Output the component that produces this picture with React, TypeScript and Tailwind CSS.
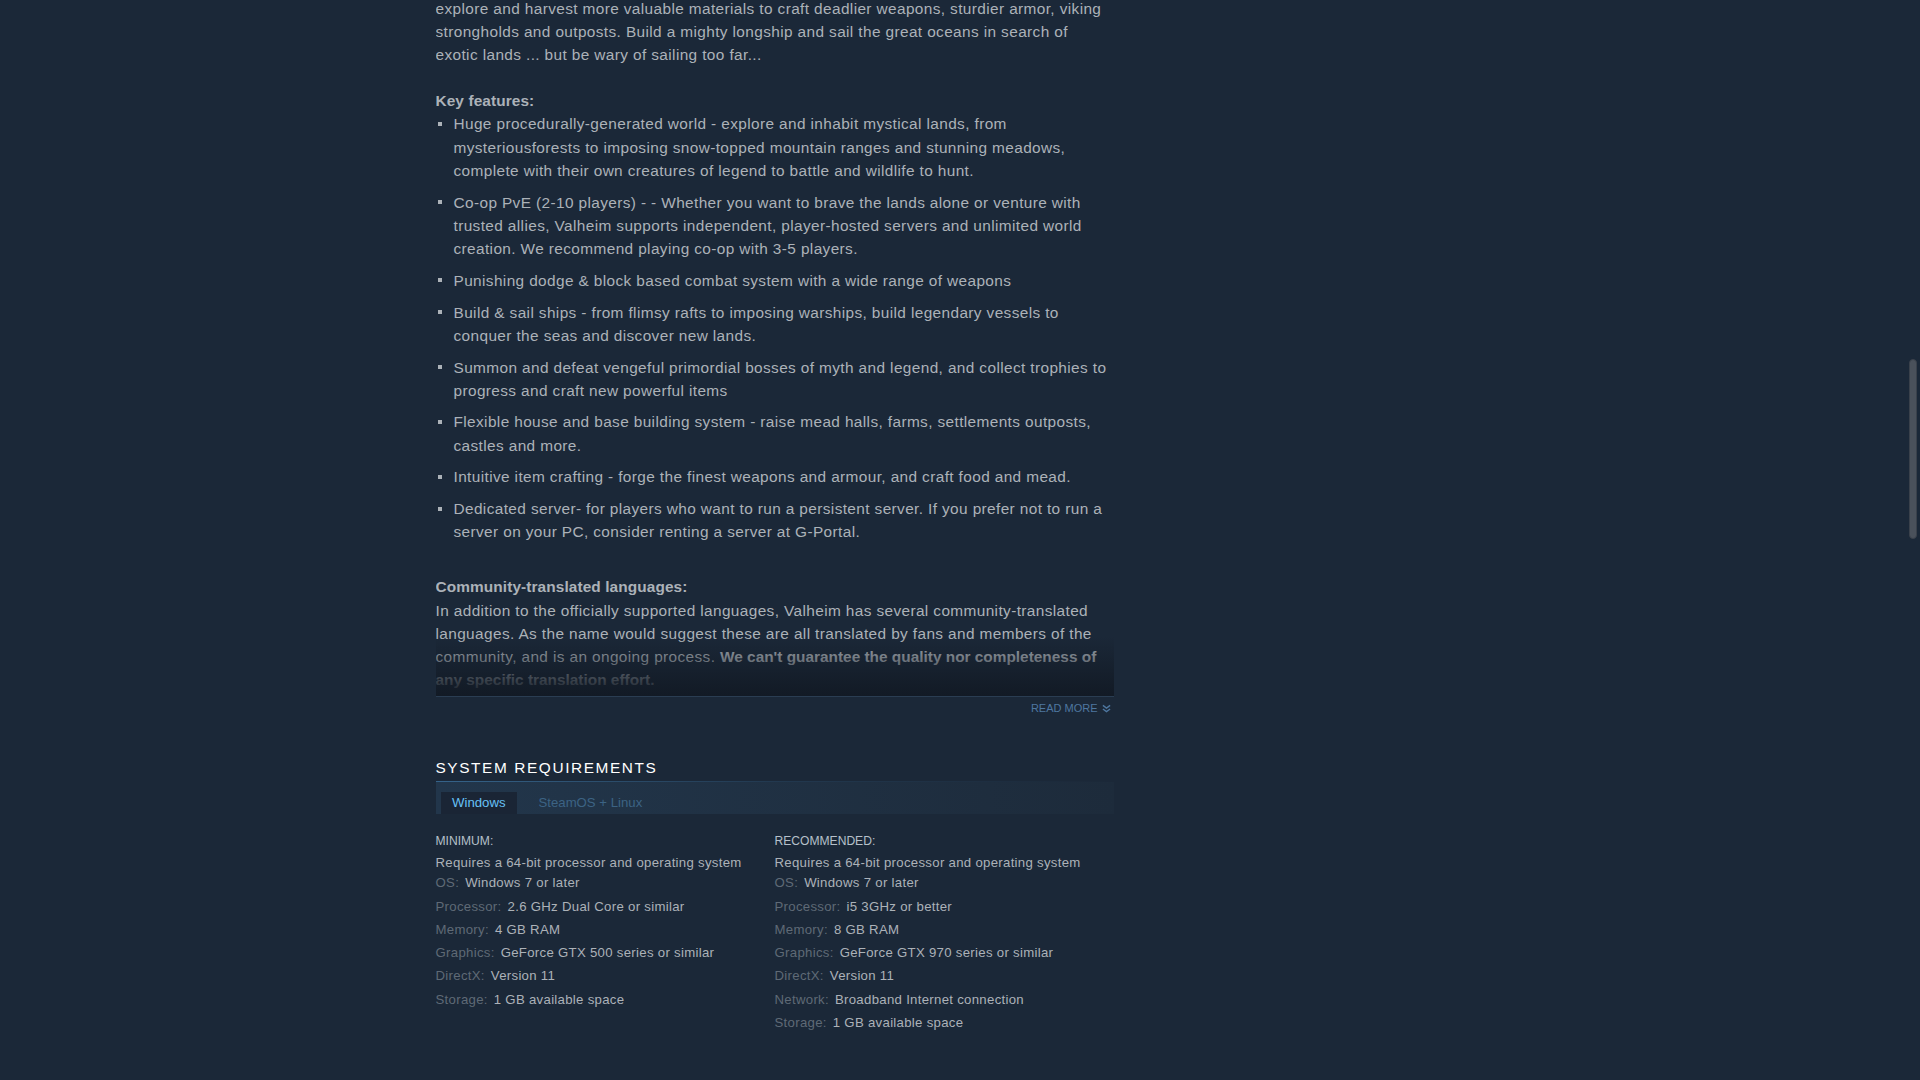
const features = [
  "Huge procedurally-generated world - explore and inhabit mystical lands, from mysteriousforests to imposing snow-topped mountain ranges and stunning meadows, complete with their own creatures of legend to battle and wildlife to hunt.",
  "Co-op PvE (2-10 players) - - Whether you want to brave the lands alone or venture with trusted allies, Valheim supports independent, player-hosted servers and unlimited world creation. We recommend playing co-op with 3-5 players.",
  "Punishing dodge & block based combat system with a wide range of weapons",
  "Build & sail ships - from flimsy rafts to imposing warships, build legendary vessels to conquer the seas and discover new lands.",
  "Summon and defeat vengeful primordial bosses of myth and legend, and collect trophies to progress and craft new powerful items",
  "Flexible house and base building system - raise mead halls, farms, settlements outposts, castles and more.",
  "Intuitive item crafting - forge the finest weapons and armour, and craft food and mead.",
  "Dedicated server- for players who want to run a persistent server. If you prefer not to run a server on your PC, consider renting a server at G-Portal.",
];

type Req = { label?: string; value: string };

const minimum: Req[] = [
  { label: "OS:", value: "Windows 7 or later" },
  { label: "Processor:", value: "2.6 GHz Dual Core or similar" },
  { label: "Memory:", value: "4 GB RAM" },
  { label: "Graphics:", value: "GeForce GTX 500 series or similar" },
  { label: "DirectX:", value: "Version 11" },
  { label: "Storage:", value: "1 GB available space" },
];

const recommended: Req[] = [
  { label: "OS:", value: "Windows 7 or later" },
  { label: "Processor:", value: "i5 3GHz or better" },
  { label: "Memory:", value: "8 GB RAM" },
  { label: "Graphics:", value: "GeForce GTX 970 series or similar" },
  { label: "DirectX:", value: "Version 11" },
  { label: "Network:", value: "Broadband Internet connection" },
  { label: "Storage:", value: "1 GB available space" },
];

function ReqColumn({ title, rows }: { title: string; rows: Req[] }) {
  return (
    <div>
      <p className="mb-[4px] text-[12.1px] leading-[16px] uppercase text-[#b6c0ca]">
        {title}
      </p>
      <ul className="text-[13.2px] leading-[19.8px] tracking-[0.3px] text-[#acb2b8]">
        <li className="mb-[1px]">Requires a 64-bit processor and operating system</li>
        {rows.map((row) => (
          <li key={row.label} className="mb-[3.5px]">
            <span className="mr-[6px] text-[#5f6a76]">{row.label}</span>
            {row.value}
          </li>
        ))}
      </ul>
    </div>
  );
}

export default function App() {
  return (
    <div className="flex h-screen overflow-hidden bg-[#1b2838] font-['Liberation_Sans',Arial,sans-serif]">
      <main className="flex-1">
        <div className="mx-auto w-[1034px]">
          <div className="w-[678px]">
            {/* description, collapsed */}
            <div className="relative -mt-[3px] h-[700px] overflow-hidden border-b border-[#2a3d52] text-[15.4px] leading-[23.1px] tracking-[0.38px] text-[#acb2b8]">
              <p>
                explore and harvest more valuable materials to craft deadlier weapons, sturdier armor, viking
                strongholds and outposts. Build a mighty longship and sail the great oceans in search of
                exotic lands ... but be wary of sailing too far...
              </p>
              <br />
              <p className="font-bold tracking-[0.1px]">Key features:</p>
              <ul>
                {features.map((item) => (
                  <li key={item} className="relative mb-[8.8px] pl-[18px]">
                    <span className="absolute left-[2px] top-[9.5px] size-[4px] bg-[#acb2b8]" />
                    {item}
                  </li>
                ))}
              </ul>
              <br />
              <p className="font-bold tracking-[0.1px]">Community-translated languages:</p>
              <p>
                In addition to the officially supported languages, Valheim has several community-translated
                languages. As the name would suggest these are all translated by fans and members of the
                community, and is an ongoing process.{" "}
                <strong className="tracking-normal">
                  We can't guarantee the quality nor completeness of any specific translation effort.
                </strong>
                <br />
                If you want to help out, please visit the official forums.
              </p>
              <div className="absolute inset-x-0 bottom-0 h-[60px] bg-gradient-to-b from-[#1b2838]/0 to-[#121a25]" />
            </div>

            <div className="mt-[5px] flex items-center justify-end gap-[4px] pr-[3px] text-[11px] leading-[12px] uppercase text-[#4e77a0]">
              Read more
              <svg width="9" height="9" viewBox="0 0 10 10" fill="none" stroke="#4e77a0" strokeWidth="1.5">
                <path d="M1 1.5 L5 4.5 L9 1.5 M1 5.5 L5 8.5 L9 5.5" />
              </svg>
            </div>

            {/* system requirements */}
            <h2 className="mt-[44px] pb-[3px] text-[15.4px] leading-[20px] tracking-[1.6px] uppercase text-white">
              System Requirements
            </h2>
            <div className="h-px bg-gradient-to-r from-[#35638a] via-[#26435e]/60 to-transparent" />
            <div className="flex items-end bg-gradient-to-r from-[#22364b] to-[#1d2b3b] px-[5px] pt-[10px] text-[13.2px]">
              <span className="flex h-[22px] items-center bg-[#1a2535] px-[11.5px] text-[#67c1f5]">Windows</span>
              <span className="ml-[10px] flex h-[22px] items-center px-[11.5px] text-[#3c6384]">SteamOS + Linux</span>
            </div>

            <div className="mt-[18.5px] grid grid-cols-2">
              <ReqColumn title="Minimum:" rows={minimum} />
              <ReqColumn title="Recommended:" rows={recommended} />
            </div>
          </div>
        </div>
      </main>
      <div className="w-[15px] pt-[359px]">
        <div className="mx-auto h-[180px] w-[8px] rounded-full border border-[#3a414b] bg-[#4a515b]" />
      </div>
    </div>
  );
}
